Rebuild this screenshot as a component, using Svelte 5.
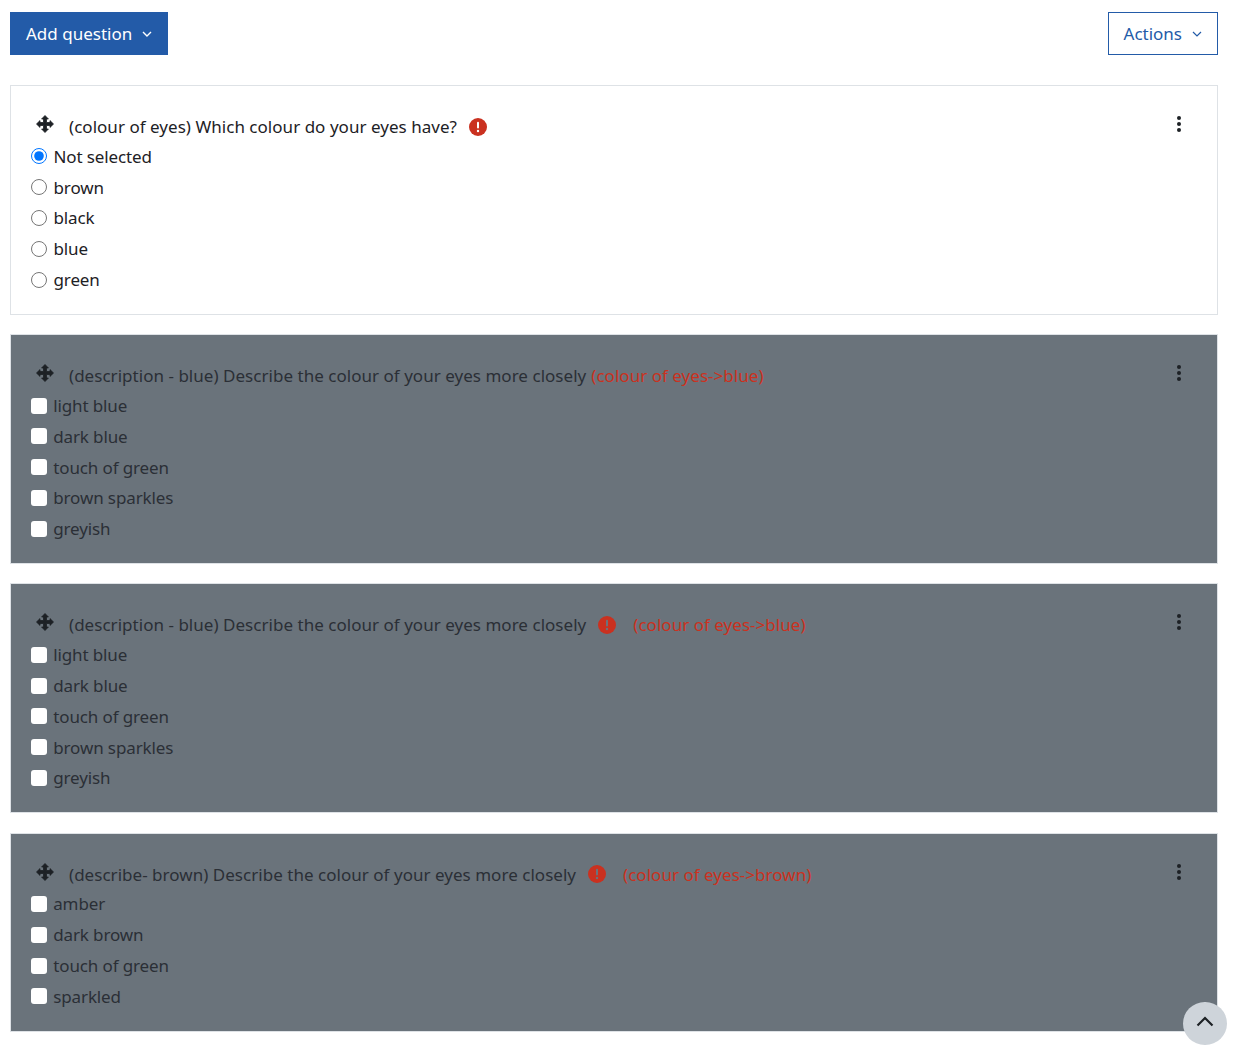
<script>
    const questions = [
        {
            title: "(colour of eyes) Which colour do your eyes have?",
            type: "radio",
            warn: true,
            options: ["Not selected", "brown", "black", "blue", "green"],
        },
        {
            title: "(description - blue) Describe the colour of your eyes more closely",
            type: "checkbox",
            condition: "(colour of eyes->blue)",
            options: ["light blue", "dark blue", "touch of green", "brown sparkles", "greyish"],
        },
        {
            title: "(description - blue) Describe the colour of your eyes more closely",
            type: "checkbox",
            warn: true,
            condition: "(colour of eyes->blue)",
            options: ["light blue", "dark blue", "touch of green", "brown sparkles", "greyish"],
        },
        {
            title: "(describe- brown) Describe the colour of your eyes more closely",
            type: "checkbox",
            warn: true,
            condition: "(colour of eyes->brown)",
            options: ["amber", "dark brown", "touch of green", "sparkled"],
        },
    ];
</script>

<div class="page">
    <div class="toolbar">
        <button class="btn primary">
            Add question
            <svg class="caret" viewBox="0 0 10 6" width="10" height="6"><path d="M1 1l4 4 4-4" fill="none" stroke="currentColor" stroke-width="1.4" /></svg>
        </button>
        <button class="btn outline">
            Actions
            <svg class="caret" viewBox="0 0 10 6" width="10" height="6"><path d="M1 1l4 4 4-4" fill="none" stroke="currentColor" stroke-width="1.2" /></svg>
        </button>
    </div>

    {#each questions as q, i}
        <section class="card" class:dimmed={i > 0}>
            <div class="head">
                <svg class="move" viewBox="0 0 18 18" width="18" height="18">
                    <path d="M9 .5L12.400 4H10.500V7.500H14V5.600L17.500 9 14 12.400V10.500H10.500V14H12.400L9 17.500 5.600 14H7.500V10.500H4V12.400L.5 9 4 5.600V7.500H7.500V4H5.600Z" fill="#1d2125" stroke="#1d2125" stroke-width=".8" stroke-linejoin="round" />
                </svg>
                <span class="title">{q.title}</span>
                {#if q.warn}
                    <svg class="warn" viewBox="0 0 18 18" width="18" height="18">
                        <circle cx="9" cy="9" r="9" fill="#ca3120" />
                        <rect x="8" y="3.800" width="2" height="6.800" rx="1" fill={i > 0 ? "#6a737b" : "#fff"} />
                        <circle cx="9" cy="13" r="1.200" fill={i > 0 ? "#6a737b" : "#fff"} />
                    </svg>
                {/if}
                {#if q.condition}
                    <span class="condition" class:spaced={q.warn}>{q.condition}</span>
                {/if}
                <svg class="menu" viewBox="0 0 4 18" width="4" height="18">
                    <circle cx="2" cy="3" r="2" fill="#1d2125" />
                    <circle cx="2" cy="9" r="2" fill="#1d2125" />
                    <circle cx="2" cy="15" r="2" fill="#1d2125" />
                </svg>
            </div>
            {#each q.options as opt, n}
                <label class="option">
                    <input type={q.type} name="q{i}" checked={q.type === "radio" && n === 0} />
                    {opt}
                </label>
            {/each}
        </section>
    {/each}
</div>

<button class="to-top" aria-label="Back to top">
    <svg viewBox="0 0 18 11" width="18" height="11"><path d="M1.500 9.500L9 2l7.500 7.500" fill="none" stroke="#1d2125" stroke-width="2.200" /></svg>
</button>

<style>
    :global(body) {
        background: #fff;
        font-family: "Noto Sans", "Open Sans", sans-serif;
    }

    .page {
        width: 1208px;
        padding: 12px 0 0 10px;
        font-size: 17px;
        color: #1d2125;
    }

    .toolbar {
        display: flex;
        justify-content: space-between;
        margin-bottom: 30px;
    }

    .btn {
        display: flex;
        align-items: center;
        gap: 10px;
        height: 43px;
        padding: 0 15px;
        font: inherit;
        border: 1px solid #235ba8;
    }

    .primary {
        background: #235ba8;
        color: #fff;
    }

    .outline {
        background: #fff;
        color: #235ba8;
    }

    .card {
        box-sizing: border-box;
        padding: 27px 20px 19px;
        margin-bottom: 19.200px;
        background: #fff;
        border: 1px solid #dee2e6;
    }

    .card.dimmed {
        background: #6a737b;
        color: #2b2f36;
    }

    .head {
        box-sizing: border-box;
        display: flex;
        align-items: center;
        height: 28px;
        padding: 0 0 1px 5px;
        letter-spacing: 0.03px;
    }

    .move {
        margin: -5px 15px 0 0;
    }

    .warn {
        margin-left: 12px;
    }

    .condition {
        margin-left: 5px;
        color: #ca3120;
    }

    .condition.spaced {
        margin-left: 17px;
    }

    .menu {
        margin: -5px 16px 0 auto;
    }

    .option {
        display: flex;
        align-items: center;
        gap: 6.500px;
        height: 30.800px;
        letter-spacing: -0.12px;
    }

    .option input {
        width: 16px;
        height: 16px;
        margin: 0;
    }

    .dimmed .option input {
        appearance: none;
        margin-left: -0.300px;
        background: #fff;
        border-radius: 3px;
    }

    .to-top {
        position: fixed;
        right: 28px;
        bottom: 5px;
        display: flex;
        align-items: center;
        justify-content: center;
        width: 44px;
        height: 43.500px;
        padding: 0 0 4px;
        background: #ced4da;
        border: none;
        border-radius: 50%;
    }
</style>
